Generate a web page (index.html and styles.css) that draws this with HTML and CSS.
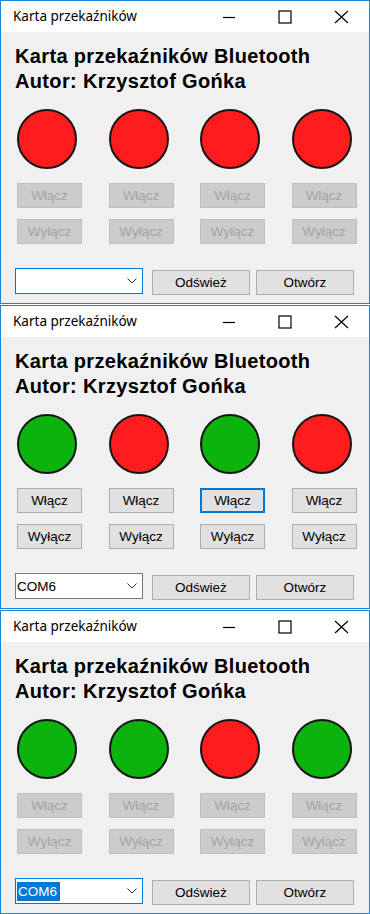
FILE: index.html
```html
<!DOCTYPE html>
<html lang="pl">
<head>
    <meta charset="UTF-8">
    <meta name="viewport" content="width=device-width, initial-scale=1.0">
    <title>Karta przekaźników</title>
    <link rel="stylesheet" href="styles.css">
</head>
<body>

<!-- okno 1: brak połączenia -->
<div class="window">
    <div class="titlebar">
        <span class="title">Karta przekaźników</span>
        <span class="ctrl"><svg width="14" height="14" viewBox="0 0 14 14"><line x1="1" y1="7.5" x2="13" y2="7.5" stroke="#000" stroke-width="1.2"/></svg></span>
        <span class="ctrl"><svg width="14" height="14" viewBox="0 0 14 14"><rect x="1" y="1" width="12" height="12" fill="none" stroke="#000" stroke-width="1.2"/></svg></span>
        <span class="ctrl"><svg width="15" height="14" viewBox="0 0 15 14"><path d="M1 1 L14 13 M14 1 L1 13" stroke="#000" stroke-width="1.2" fill="none"/></svg></span>
    </div>
    <div class="content">
        <h1>Karta przekaźników Bluetooth<br>Autor: Krzysztof Gońka</h1>
        <div class="relays">
            <div class="led off"></div>
            <div class="led off"></div>
            <div class="led off"></div>
            <div class="led off"></div>
            <button class="btn" disabled>Włącz</button>
            <button class="btn" disabled>Włącz</button>
            <button class="btn" disabled>Włącz</button>
            <button class="btn" disabled>Włącz</button>
            <button class="btn" disabled>Wyłącz</button>
            <button class="btn" disabled>Wyłącz</button>
            <button class="btn" disabled>Wyłącz</button>
            <button class="btn" disabled>Wyłącz</button>
        </div>
        <div class="bottom">
            <div class="combo focused"><span class="value"></span><svg class="arrow" width="10" height="6" viewBox="0 0 10 6"><polyline points="0.5,0.5 5,5 9.5,0.5" fill="none" stroke="#333" stroke-width="1"/></svg></div>
            <button class="btn wide">Odśwież</button>
            <button class="btn wide last">Otwórz</button>
        </div>
    </div>
</div>

<!-- okno 2: połączono z COM6 -->
<div class="window">
    <div class="titlebar">
        <span class="title">Karta przekaźników</span>
        <span class="ctrl"><svg width="14" height="14" viewBox="0 0 14 14"><line x1="1" y1="7.5" x2="13" y2="7.5" stroke="#000" stroke-width="1.2"/></svg></span>
        <span class="ctrl"><svg width="14" height="14" viewBox="0 0 14 14"><rect x="1" y="1" width="12" height="12" fill="none" stroke="#000" stroke-width="1.2"/></svg></span>
        <span class="ctrl"><svg width="15" height="14" viewBox="0 0 15 14"><path d="M1 1 L14 13 M14 1 L1 13" stroke="#000" stroke-width="1.2" fill="none"/></svg></span>
    </div>
    <div class="content">
        <h1>Karta przekaźników Bluetooth<br>Autor: Krzysztof Gońka</h1>
        <div class="relays">
            <div class="led on"></div>
            <div class="led off"></div>
            <div class="led on"></div>
            <div class="led off"></div>
            <button class="btn">Włącz</button>
            <button class="btn">Włącz</button>
            <button class="btn active">Włącz</button>
            <button class="btn">Włącz</button>
            <button class="btn">Wyłącz</button>
            <button class="btn">Wyłącz</button>
            <button class="btn">Wyłącz</button>
            <button class="btn">Wyłącz</button>
        </div>
        <div class="bottom">
            <div class="combo"><span class="value">COM6</span><svg class="arrow" width="10" height="6" viewBox="0 0 10 6"><polyline points="0.5,0.5 5,5 9.5,0.5" fill="none" stroke="#333" stroke-width="1"/></svg></div>
            <button class="btn wide">Odśwież</button>
            <button class="btn wide last">Otwórz</button>
        </div>
    </div>
</div>

<!-- okno 3: port wybrany, rozłączono -->
<div class="window">
    <div class="titlebar">
        <span class="title">Karta przekaźników</span>
        <span class="ctrl"><svg width="14" height="14" viewBox="0 0 14 14"><line x1="1" y1="7.5" x2="13" y2="7.5" stroke="#000" stroke-width="1.2"/></svg></span>
        <span class="ctrl"><svg width="14" height="14" viewBox="0 0 14 14"><rect x="1" y="1" width="12" height="12" fill="none" stroke="#000" stroke-width="1.2"/></svg></span>
        <span class="ctrl"><svg width="15" height="14" viewBox="0 0 15 14"><path d="M1 1 L14 13 M14 1 L1 13" stroke="#000" stroke-width="1.2" fill="none"/></svg></span>
    </div>
    <div class="content">
        <h1>Karta przekaźników Bluetooth<br>Autor: Krzysztof Gońka</h1>
        <div class="relays">
            <div class="led on"></div>
            <div class="led on"></div>
            <div class="led off"></div>
            <div class="led on"></div>
            <button class="btn" disabled>Włącz</button>
            <button class="btn" disabled>Włącz</button>
            <button class="btn" disabled>Włącz</button>
            <button class="btn" disabled>Włącz</button>
            <button class="btn" disabled>Wyłącz</button>
            <button class="btn" disabled>Wyłącz</button>
            <button class="btn" disabled>Wyłącz</button>
            <button class="btn" disabled>Wyłącz</button>
        </div>
        <div class="bottom">
            <div class="combo focused"><span class="value selected">COM6</span><svg class="arrow" width="10" height="6" viewBox="0 0 10 6"><polyline points="0.5,0.5 5,5 9.5,0.5" fill="none" stroke="#333" stroke-width="1"/></svg></div>
            <button class="btn wide">Odśwież</button>
            <button class="btn wide last">Otwórz</button>
        </div>
    </div>
</div>

</body>
</html>
```

FILE: styles.css
```css
body {
    margin: 0;
    background-color: #fff;
    font-family: 'Liberation Sans', Arial, sans-serif;
    color: #000;
}
.window {
    box-sizing: border-box;
    width: 370px;
    height: 304px;
    margin-bottom: 1px;
    border: 1px solid #1a83d6;
    background-color: #f0f0f0;
    overflow: hidden;
}
.titlebar {
    display: flex;
    align-items: center;
    height: 31px;
    padding-left: 12px;
    background-color: #fff;
    font-family: 'Noto Sans', sans-serif;
    font-size: 13.5px;
}
.titlebar .title {
    flex: 1;
    margin-top: -1px;
}
.titlebar .ctrl {
    width: 56px;
    display: flex;
    justify-content: center;
    align-items: center;
}
.content {
    padding: 12px 0 0 14px;
}
h1 {
    margin: 0 0 16px;
    font-size: 20px;
    line-height: 24.5px;
    letter-spacing: 0.35px;
    font-weight: bold;
}
.relays {
    display: grid;
    grid-template-columns: repeat(4, 65px);
    column-gap: 26.5px;
    margin-left: 2px;
}
.led {
    box-sizing: border-box;
    width: 60px;
    height: 60px;
    border-radius: 50%;
    border: 2px solid #151515;
    margin-bottom: 14px;
}
.led.off {
    background-color: #ff1c1c;
}
.led.on {
    background-color: #0cb30c;
}
.btn {
    box-sizing: border-box;
    height: 25px;
    padding: 0;
    border: 1px solid #adadad;
    background-color: #e1e1e1;
    font-family: 'Liberation Sans', Arial, sans-serif;
    font-size: 13.5px;
    color: #000;
    margin-bottom: 11px;
}
.btn:disabled {
    background-color: #cccccc;
    border-color: #bfbfbf;
    color: #a3a3a3;
}
.btn.active {
    border: 2px solid #0078d7;
}
.bottom {
    display: flex;
    align-items: flex-start;
    margin-top: 13px;
}
.combo {
    box-sizing: border-box;
    width: 128px;
    height: 26px;
    display: flex;
    align-items: center;
    padding: 0 5px 0 1px;
    border: 1px solid #7a7a7a;
    background-color: #fff;
    font-size: 13.5px;
}
.combo.focused {
    border-color: #0078d7;
}
.combo .value {
    flex: 1;
}
.combo .value.selected {
    flex: none;
    margin-right: auto;
    padding: 2px 3px 2px 1px;
    background-color: #0078d7;
    color: #fff;
}
.btn.wide {
    width: 98px;
    margin: 2px 0 0 9px;
}
.btn.wide.last {
    margin-left: 6px;
}
```
